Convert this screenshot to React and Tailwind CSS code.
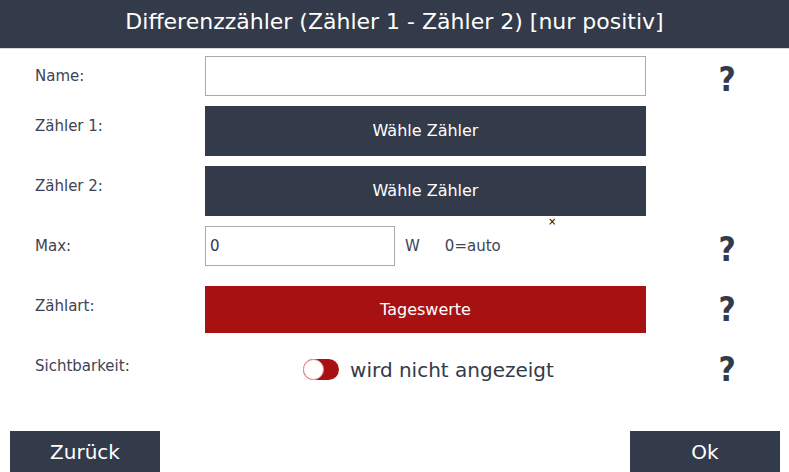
// App.jsx
// Differenzzähler settings dialog

import React, { useState } from 'react';

const font = { fontFamily: '"DejaVu Sans", Verdana, sans-serif' };

function Help() {
  return (
    <div
      className="w-[80px] flex justify-center text-[33px] font-bold text-[#333a4a] leading-none select-none"
      style={{ fontFamily: '"DejaVu Sans Condensed", "DejaVu Sans", sans-serif' }}
    >
      ?
    </div>
  );
}

function Label({ children }) {
  return (
    <div className="w-[205px] shrink-0 pl-[35px] h-[40px] flex items-center text-[15px] text-[#3d4455]">
      {children}
    </div>
  );
}

export default function App() {
  const [name, setName] = useState('');
  const [max, setMax] = useState('0');
  const [visible, setVisible] = useState(false);

  return (
    <div className="w-[789px] h-[472px] bg-white flex flex-col overflow-hidden" style={font}>
      {/* Header */}
      <header className="h-[49px] pb-[6px] bg-[#333a4a] border-b border-[#d4d6da] flex items-center justify-center shrink-0">
        <h1 className="text-[22px] text-white">Differenzzähler (Zähler 1 - Zähler 2) [nur positiv]</h1>
      </header>

      {/* Form */}
      <main className="flex-1 flex flex-col pt-[7px]">
        <div className="flex items-start h-[40px]">
          <Label>Name:</Label>
          <input
            value={name}
            onChange={(e) => setName(e.target.value)}
            className="w-[441px] h-[40px] border border-[#aaaaaa] px-[4px] text-[15px] text-[#333a4a] outline-none"
          />
          <div className="h-[40px] pt-[6px] flex items-center ml-[41px]">
            <Help />
          </div>
        </div>

        <div className="flex items-start mt-[10px]">
          <Label>Zähler 1:</Label>
          <button className="w-[441px] h-[50px] bg-[#333a4a] text-white text-[16px]">Wähle Zähler</button>
        </div>

        <div className="flex items-start mt-[10px] relative">
          <Label>Zähler 2:</Label>
          <button className="w-[441px] h-[50px] bg-[#333a4a] text-white text-[16px]">Wähle Zähler</button>
          <span className="absolute left-[548px] top-[51px] text-[10px] leading-none text-black">×</span>
        </div>

        <div className="flex items-start mt-[10px] h-[40px]">
          <Label>Max:</Label>
          <div className="w-[441px] h-[40px] flex items-center">
            <input
              value={max}
              onChange={(e) => setMax(e.target.value)}
              className="w-[190px] h-[40px] border border-[#aaaaaa] px-[4px] text-[15px] text-[#333a4a] outline-none"
            />
            <span className="ml-[10px] text-[15px] text-[#3d4455]">W</span>
            <span className="ml-[25px] text-[15px] text-[#3d4455]">0=auto</span>
          </div>
          <div className="h-[46px] flex items-center ml-[41px]">
            <Help />
          </div>
        </div>

        <div className="flex items-start mt-[20px]">
          <Label>Zählart:</Label>
          <button className="w-[441px] h-[47px] bg-[#a81111] text-white text-[16px]">Tageswerte</button>
          <div className="h-[47px] flex items-center ml-[41px]">
            <Help />
          </div>
        </div>

        <div className="flex items-start mt-[13px]">
          <Label>Sichtbarkeit:</Label>
          <div className="w-[441px] h-[47px] flex items-center justify-center gap-[11px] pl-[6px]">
            <button
              onClick={() => setVisible(!visible)}
              className="w-[36px] h-[21px] rounded-full bg-[#a81111] relative"
            >
              <span className="absolute left-0 top-0 w-[21px] h-[21px] rounded-full bg-white border border-[#e8a0a0]" />
            </button>
            <span className="text-[20px] text-[#333a4a]">
              {visible ? 'wird angezeigt' : 'wird nicht angezeigt'}
            </span>
          </div>
          <div className="h-[47px] flex items-center ml-[41px]">
            <Help />
          </div>
        </div>
      </main>

      {/* Footer */}
      <footer className="flex justify-between pl-[10px] pr-[9px] shrink-0">
        <button className="w-[150px] h-[41px] bg-[#333a4a] text-white text-[20px]">Zurück</button>
        <button className="w-[150px] h-[41px] bg-[#333a4a] text-white text-[20px]">Ok</button>
      </footer>
    </div>
  );
}
